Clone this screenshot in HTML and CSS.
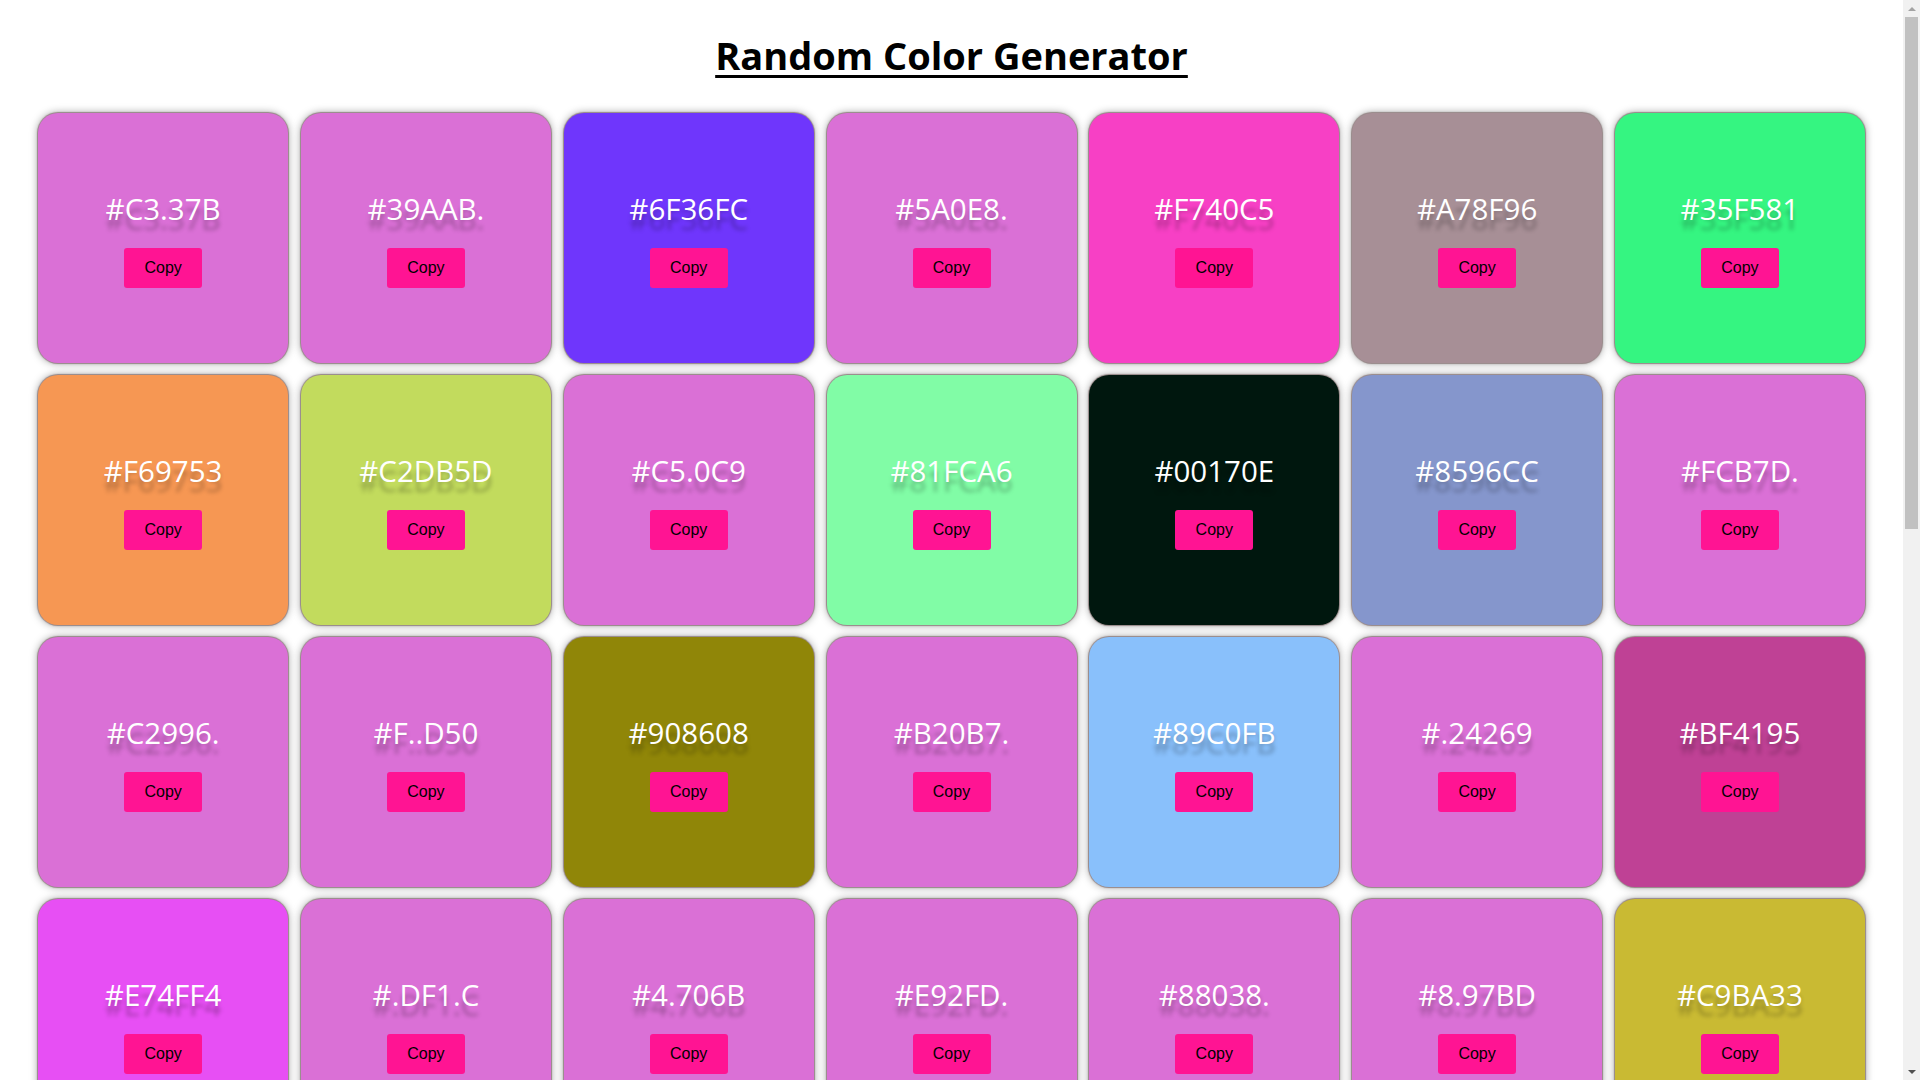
FILE: index.html
```html
<!DOCTYPE html>
<html lang="en">
<head>
<meta charset="utf-8">
<title>Random Color Generator</title>
<link rel="stylesheet" href="styles.css">
</head>
<body>
<div class="scrollbar" aria-hidden="true">
  <div class="sb-arrow sb-up"></div>
  <div class="sb-track"><div class="sb-thumb"></div></div>
  <div class="sb-arrow sb-down"></div>
</div>
<h1 class="title">Random Color Generator</h1>
<div class="grid">
  <div class="card"><h2 class="hex">#C3.37B</h2><button class="copy">Copy</button></div>
  <div class="card"><h2 class="hex">#39AAB.</h2><button class="copy">Copy</button></div>
  <div class="card c-6f36fc"><h2 class="hex">#6F36FC</h2><button class="copy">Copy</button></div>
  <div class="card"><h2 class="hex">#5A0E8.</h2><button class="copy">Copy</button></div>
  <div class="card c-f740c5"><h2 class="hex">#F740C5</h2><button class="copy">Copy</button></div>
  <div class="card c-a78f96"><h2 class="hex">#A78F96</h2><button class="copy">Copy</button></div>
  <div class="card c-35f581"><h2 class="hex">#35F581</h2><button class="copy">Copy</button></div>

  <div class="card c-f69753"><h2 class="hex">#F69753</h2><button class="copy">Copy</button></div>
  <div class="card c-c2db5d"><h2 class="hex">#C2DB5D</h2><button class="copy">Copy</button></div>
  <div class="card"><h2 class="hex">#C5.0C9</h2><button class="copy">Copy</button></div>
  <div class="card c-81fca6"><h2 class="hex">#81FCA6</h2><button class="copy">Copy</button></div>
  <div class="card c-00170e"><h2 class="hex">#00170E</h2><button class="copy">Copy</button></div>
  <div class="card c-8596cc"><h2 class="hex">#8596CC</h2><button class="copy">Copy</button></div>
  <div class="card"><h2 class="hex">#FCB7D.</h2><button class="copy">Copy</button></div>

  <div class="card"><h2 class="hex">#C2996.</h2><button class="copy">Copy</button></div>
  <div class="card"><h2 class="hex">#F..D50</h2><button class="copy">Copy</button></div>
  <div class="card c-908608"><h2 class="hex">#908608</h2><button class="copy">Copy</button></div>
  <div class="card"><h2 class="hex">#B20B7.</h2><button class="copy">Copy</button></div>
  <div class="card c-89c0fb"><h2 class="hex">#89C0FB</h2><button class="copy">Copy</button></div>
  <div class="card"><h2 class="hex">#.24269</h2><button class="copy">Copy</button></div>
  <div class="card c-bf4195"><h2 class="hex">#BF4195</h2><button class="copy">Copy</button></div>

  <div class="card c-e74ff4"><h2 class="hex">#E74FF4</h2><button class="copy">Copy</button></div>
  <div class="card"><h2 class="hex">#.DF1.C</h2><button class="copy">Copy</button></div>
  <div class="card"><h2 class="hex">#4.706B</h2><button class="copy">Copy</button></div>
  <div class="card"><h2 class="hex">#E92FD.</h2><button class="copy">Copy</button></div>
  <div class="card"><h2 class="hex">#88038.</h2><button class="copy">Copy</button></div>
  <div class="card"><h2 class="hex">#8.97BD</h2><button class="copy">Copy</button></div>
  <div class="card c-c9ba33"><h2 class="hex">#C9BA33</h2><button class="copy">Copy</button></div>

  <div class="card c-4a9d3f"><h2 class="hex">#4A9D3F</h2><button class="copy">Copy</button></div>
  <div class="card"><h2 class="hex">#7.1E3A</h2><button class="copy">Copy</button></div>
  <div class="card c-d85c21"><h2 class="hex">#D85C21</h2><button class="copy">Copy</button></div>
  <div class="card"><h2 class="hex">#B6.FA2</h2><button class="copy">Copy</button></div>
  <div class="card c-3c6ee8"><h2 class="hex">#3C6EE8</h2><button class="copy">Copy</button></div>
  <div class="card"><h2 class="hex">#9D4.7.</h2><button class="copy">Copy</button></div>
  <div class="card c-e0c46b"><h2 class="hex">#E0C46B</h2><button class="copy">Copy</button></div>

  <div class="card"><h2 class="hex">#.5A81C</h2><button class="copy">Copy</button></div>
  <div class="card c-27b5a4"><h2 class="hex">#27B5A4</h2><button class="copy">Copy</button></div>
  <div class="card"><h2 class="hex">#F3.B09</h2><button class="copy">Copy</button></div>
  <div class="card c-a13fd2"><h2 class="hex">#A13FD2</h2><button class="copy">Copy</button></div>
  <div class="card"><h2 class="hex">#62E0.4</h2><button class="copy">Copy</button></div>
  <div class="card c-f2a9b8"><h2 class="hex">#F2A9B8</h2><button class="copy">Copy</button></div>
  <div class="card"><h2 class="hex">#1B7C.E</h2><button class="copy">Copy</button></div>

  <div class="card c-5e8c2b"><h2 class="hex">#5E8C2B</h2><button class="copy">Copy</button></div>
  <div class="card"><h2 class="hex">#C0.4F7</h2><button class="copy">Copy</button></div>
  <div class="card"><h2 class="hex">#8E2.A5</h2><button class="copy">Copy</button></div>
  <div class="card c-36a1d9"><h2 class="hex">#36A1D9</h2><button class="copy">Copy</button></div>
  <div class="card"><h2 class="hex">#F7D3.0</h2><button class="copy">Copy</button></div>
  <div class="card c-b04e63"><h2 class="hex">#B04E63</h2><button class="copy">Copy</button></div>
  <div class="card"><h2 class="hex">#.9C5E1</h2><button class="copy">Copy</button></div>

  <div class="card"><h2 class="hex">#4D.B86</h2><button class="copy">Copy</button></div>
  <div class="card c-e86f4a"><h2 class="hex">#E86F4A</h2><button class="copy">Copy</button></div>
  <div class="card"><h2 class="hex">#A5F0.3</h2><button class="copy">Copy</button></div>
  <div class="card c-2f4b9e"><h2 class="hex">#2F4B9E</h2><button class="copy">Copy</button></div>
  <div class="card"><h2 class="hex">#D1.67C</h2><button class="copy">Copy</button></div>
  <div class="card c-7bd36a"><h2 class="hex">#7BD36A</h2><button class="copy">Copy</button></div>
  <div class="card"><h2 class="hex">#F0A2.D</h2><button class="copy">Copy</button></div>
</div>
</body>
</html>
```
FILE: styles.css
```css
html, body {
  margin: 0;
  padding: 0;
  background: #ffffff;
}

body {
  font-family: "Open Sans", "Noto Sans", sans-serif;
  padding-right: 17px;
}

/* imitation of the classic browser scrollbar seen in the screenshot */
.scrollbar {
  position: fixed;
  top: 0;
  right: 0;
  width: 17px;
  height: 100vh;
  background: #f1f1f1;
  display: flex;
  flex-direction: column;
  z-index: 10;
}

.sb-arrow {
  height: 17px;
  flex: none;
  display: flex;
  align-items: center;
  justify-content: center;
}

.sb-arrow::before {
  content: "";
  width: 0;
  height: 0;
  border-left: 4px solid transparent;
  border-right: 4px solid transparent;
}

.sb-up::before {
  border-bottom: 4px solid #a3a3a3;
}

.sb-down::before {
  border-top: 4px solid #505050;
}

.sb-track {
  flex: 1;
  padding: 0 2px;
}

.sb-thumb {
  height: 512px;
  background: #c1c1c1;
}

.title {
  margin: 0;
  padding-top: 30px;
  font-family: "Open Sans", sans-serif;
  font-size: 38px;
  font-weight: 700;
  line-height: 50px;
  text-align: center;
  text-decoration: underline;
  text-decoration-thickness: 3px;
  text-underline-offset: 5px;
  color: #000;
}

.grid {
  display: grid;
  grid-template-columns: repeat(7, 250px);
  column-gap: 12.8px;
  row-gap: 12px;
  justify-content: center;
  margin-top: 33px;
  padding-bottom: 14px;
}

.card {
  height: 250px;
  border-radius: 20px;
  background: #da70d6;
  box-shadow: 0 0 1px 1px rgba(90, 60, 60, 0.5), 0 0 8px rgba(0, 0, 0, 0.4);
  display: flex;
  flex-direction: column;
  align-items: center;
  justify-content: center;
}

.hex {
  margin: 0 0 19px 0;
  font-family: "Open Sans", sans-serif;
  font-size: 29.5px;
  font-weight: 400;
  line-height: 40px;
  color: #ffffff;
  text-shadow: 0 10px 4px rgba(0, 0, 0, 0.28);
}

.copy {
  width: 78px;
  height: 40px;
  padding: 0;
  border: none;
  border-radius: 3px;
  background: #ff1493;
  color: #000;
  font-family: "Liberation Sans", Arial, sans-serif;
  font-size: 16px;
  cursor: pointer;
}

.c-6f36fc { background: #6f36fc; }
.c-f740c5 { background: #f740c5; }
.c-a78f96 { background: #a78f96; }
.c-35f581 { background: #35f581; }
.c-f69753 { background: #f69753; }
.c-c2db5d { background: #c2db5d; }
.c-81fca6 { background: #81fca6; }
.c-00170e { background: #00170e; }
.c-8596cc { background: #8596cc; }
.c-908608 { background: #908608; }
.c-89c0fb { background: #89c0fb; }
.c-bf4195 { background: #bf4195; }
.c-e74ff4 { background: #e74ff4; }
.c-c9ba33 { background: #c9ba33; }
.c-4a9d3f { background: #4a9d3f; }
.c-d85c21 { background: #d85c21; }
.c-3c6ee8 { background: #3c6ee8; }
.c-e0c46b { background: #e0c46b; }
.c-27b5a4 { background: #27b5a4; }
.c-a13fd2 { background: #a13fd2; }
.c-f2a9b8 { background: #f2a9b8; }
.c-5e8c2b { background: #5e8c2b; }
.c-36a1d9 { background: #36a1d9; }
.c-b04e63 { background: #b04e63; }
.c-e86f4a { background: #e86f4a; }
.c-2f4b9e { background: #2f4b9e; }
.c-7bd36a { background: #7bd36a; }
```
